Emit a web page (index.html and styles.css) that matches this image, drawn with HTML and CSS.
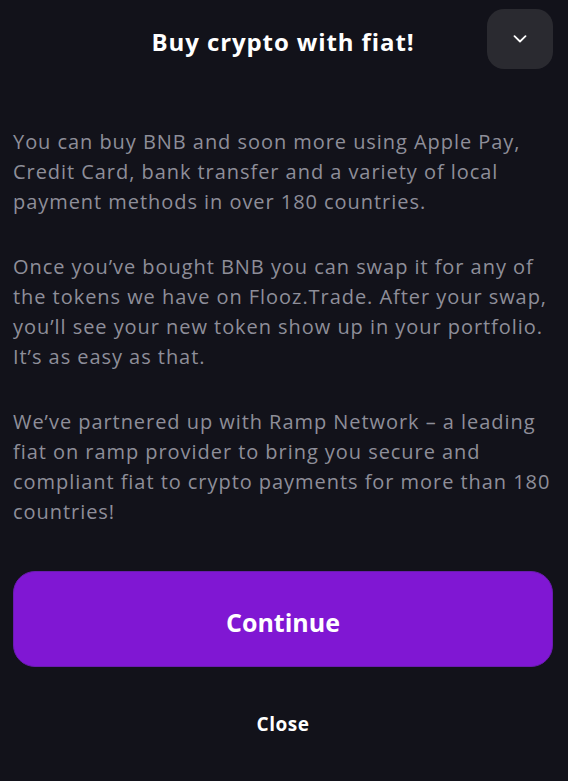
FILE: index.html
```html
<!DOCTYPE html>
<html>
<head>
<meta charset="utf-8">
<link rel="stylesheet" href="styles.css">
</head>
<body>
<div class="modal">
  <header class="head">
    <h1 class="title">Buy crypto with fiat!</h1>
    <button class="toggle" aria-label="Collapse">
      <svg width="14" height="8" viewBox="0 0 14 8"><path d="M1.5 1.2 L7 6.5 L12.5 1.2" fill="none" stroke="#fff" stroke-width="1.8" stroke-linecap="round" stroke-linejoin="round"/></svg>
    </button>
  </header>
  <div class="body">
    <p>You can buy BNB and soon more using Apple Pay, Credit Card, bank transfer and a variety of local payment methods in over 180 countries.</p>
    <p>Once you’ve bought BNB you can swap it for any of the tokens we have on Flooz.Trade. After your swap, you’ll see your new token show up in your portfolio. It’s as easy as that.</p>
    <p>We’ve partnered up with Ramp Network – a leading fiat on ramp provider to bring you secure and compliant fiat to crypto payments for more than 180 countries!</p>
  </div>
  <button class="continue">Continue</button>
  <button class="close">Close</button>
</div>
</body>
</html>
```
FILE: styles.css
```css
html, body { margin: 0; padding: 0; background: #12121a; }
body { font-family: "Open Sans", "Noto Sans", sans-serif; color: #fff; width: 568px; height: 781px; overflow: hidden; }
.modal { padding: 9px 15px 0 13px; display: flex; flex-direction: column; }
.head { position: relative; height: 60px; display: flex; align-items: center; justify-content: center; }
.title { margin: 5px 0 0 0; font-size: 24px; font-weight: 700; letter-spacing: 0.9px; }
.toggle { position: absolute; right: 0; top: 0; width: 66px; height: 60px; border: none; border-radius: 17px; background: #2a2a30; display: flex; align-items: center; justify-content: center; padding: 0; }
.body { margin-top: 58px; margin-right: -2px; font-size: 20px; line-height: 30px; color: #8e8e99; letter-spacing: 0.95px; }
.body p { margin: 0 0 35px 0; }
.continue { margin-top: 9px; height: 96px; padding: 5px 0 0 0; border-radius: 22px; border: 1px solid #6a1bb0; background: #8017d3; color: #fff; font-family: inherit; font-size: 25px; font-weight: 700; }
.close { margin-top: 43px; background: none; border: none; color: #fff; font-family: inherit; font-size: 19px; font-weight: 700; letter-spacing: 0.5px; }
```
